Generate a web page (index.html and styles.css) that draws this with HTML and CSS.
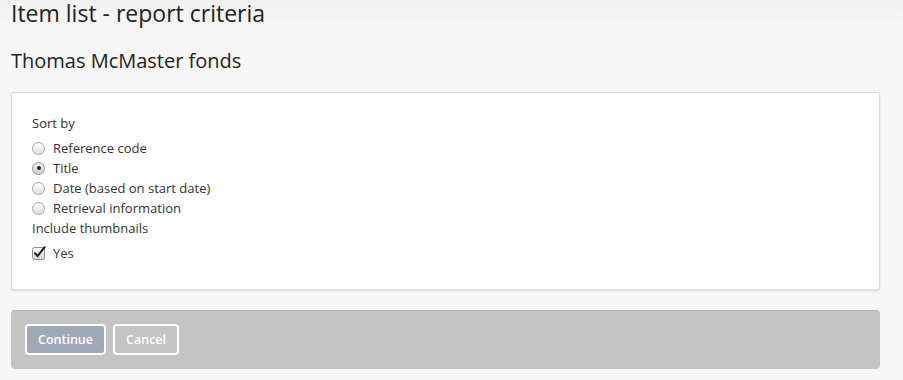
FILE: index.html
```html
<!DOCTYPE html>
<html>
<head>
<meta charset="utf-8">
<link rel="stylesheet" href="styles.css">
</head>
<body>
<div class="page">
  <h1 class="title">Item list - report criteria</h1>
  <h2 class="subtitle">Thomas McMaster fonds</h2>
  <section class="card">
    <div class="label">Sort by</div>
    <ul class="options">
      <li class="option"><span class="radio"></span><span>Reference code</span></li>
      <li class="option"><span class="radio checked"></span><span>Title</span></li>
      <li class="option"><span class="radio"></span><span>Date (based on start date)</span></li>
      <li class="option"><span class="radio"></span><span>Retrieval information</span></li>
    </ul>
    <div class="label">Include thumbnails</div>
    <div class="option check-row">
      <svg class="checkbox" width="14" height="14" viewBox="0 0 14 14">
        <defs>
          <linearGradient id="cbg" x1="0" y1="0" x2="0" y2="1">
            <stop offset="0" stop-color="#ffffff"/>
            <stop offset="1" stop-color="#d6d6d6"/>
          </linearGradient>
        </defs>
        <rect x="0.5" y="1.5" width="12" height="12" rx="2" fill="url(#cbg)" stroke="#8d8d8d"/>
        <path d="M3 7.2 L5.6 10.2 L12.6 1.2" fill="none" stroke="#222" stroke-width="2" stroke-linecap="round" stroke-linejoin="round"/>
      </svg>
      <span>Yes</span>
    </div>
  </section>
  <div class="actions">
    <button class="btn btn-primary">Continue</button>
    <button class="btn">Cancel</button>
  </div>
</div>
</body>
</html>
```

FILE: styles.css
```css
html, body {
  margin: 0;
  padding: 0;
  background: #f7f7f7;
}
body {
  font-family: "Open Sans", "DejaVu Sans", sans-serif;
  color: #333;
}
.page {
  padding: 0 23px 0 11px;
  background: linear-gradient(to bottom, #f1f1f1 0, #f7f7f7 30px);
}
.title {
  margin: 0;
  padding-top: 0;
  font-size: 23px;
  font-weight: 400;
  line-height: 26px;
  color: #222;
}
.subtitle {
  margin: 0;
  padding-top: 22px;
  font-size: 20px;
  font-weight: 400;
  line-height: 26px;
  color: #222;
}
.card {
  margin-top: 18px;
  background: #fff;
  border: 1px solid #dcdcdc;
  border-radius: 2px;
  box-shadow: 0 1px 2px rgba(0,0,0,0.12);
  padding: 20px 20px 26px 20px;
  font-size: 13px;
  line-height: 20px;
}
.label {
  color: #333;
}
.options {
  list-style: none;
  margin: 5px 0 0 0;
  padding: 0;
}
.option {
  display: flex;
  align-items: center;
  gap: 8px;
  height: 20px;
  color: #333;
}
.radio {
  box-sizing: border-box;
  width: 13px;
  height: 13px;
  border-radius: 50%;
  border: 1px solid #a6a6a6;
  background: linear-gradient(to bottom, #ffffff, #dedede);
  display: inline-flex;
  align-items: center;
  justify-content: center;
}
.radio.checked {
  background: linear-gradient(to bottom, #f2f2f2, #cfcfcf);
  border-color: #8f8f8f;
}
.radio.checked::after {
  content: "";
  width: 4px;
  height: 4px;
  border-radius: 50%;
  background: #222;
}
.check-row {
  margin-top: 5px;
}
.checkbox {
  display: block;
  margin-right: -1px;
}
.actions {
  margin-top: 20px;
  background: #c4c4c4;
  border-top: 1px solid #b5b5b5;
  border-radius: 4px;
  padding: 13px 14px 14px 14px;
  display: flex;
  gap: 7px;
}
.btn {
  box-sizing: border-box;
  height: 31px;
  padding: 0 11px;
  border: 2px solid #fff;
  border-radius: 4px;
  background: transparent;
  color: #fff;
  font-family: "Open Sans", "DejaVu Sans", sans-serif;
  font-size: 12.5px;
  font-weight: 600;
  cursor: pointer;
}
.btn-primary {
  background: #a0a9b8;
}
```
